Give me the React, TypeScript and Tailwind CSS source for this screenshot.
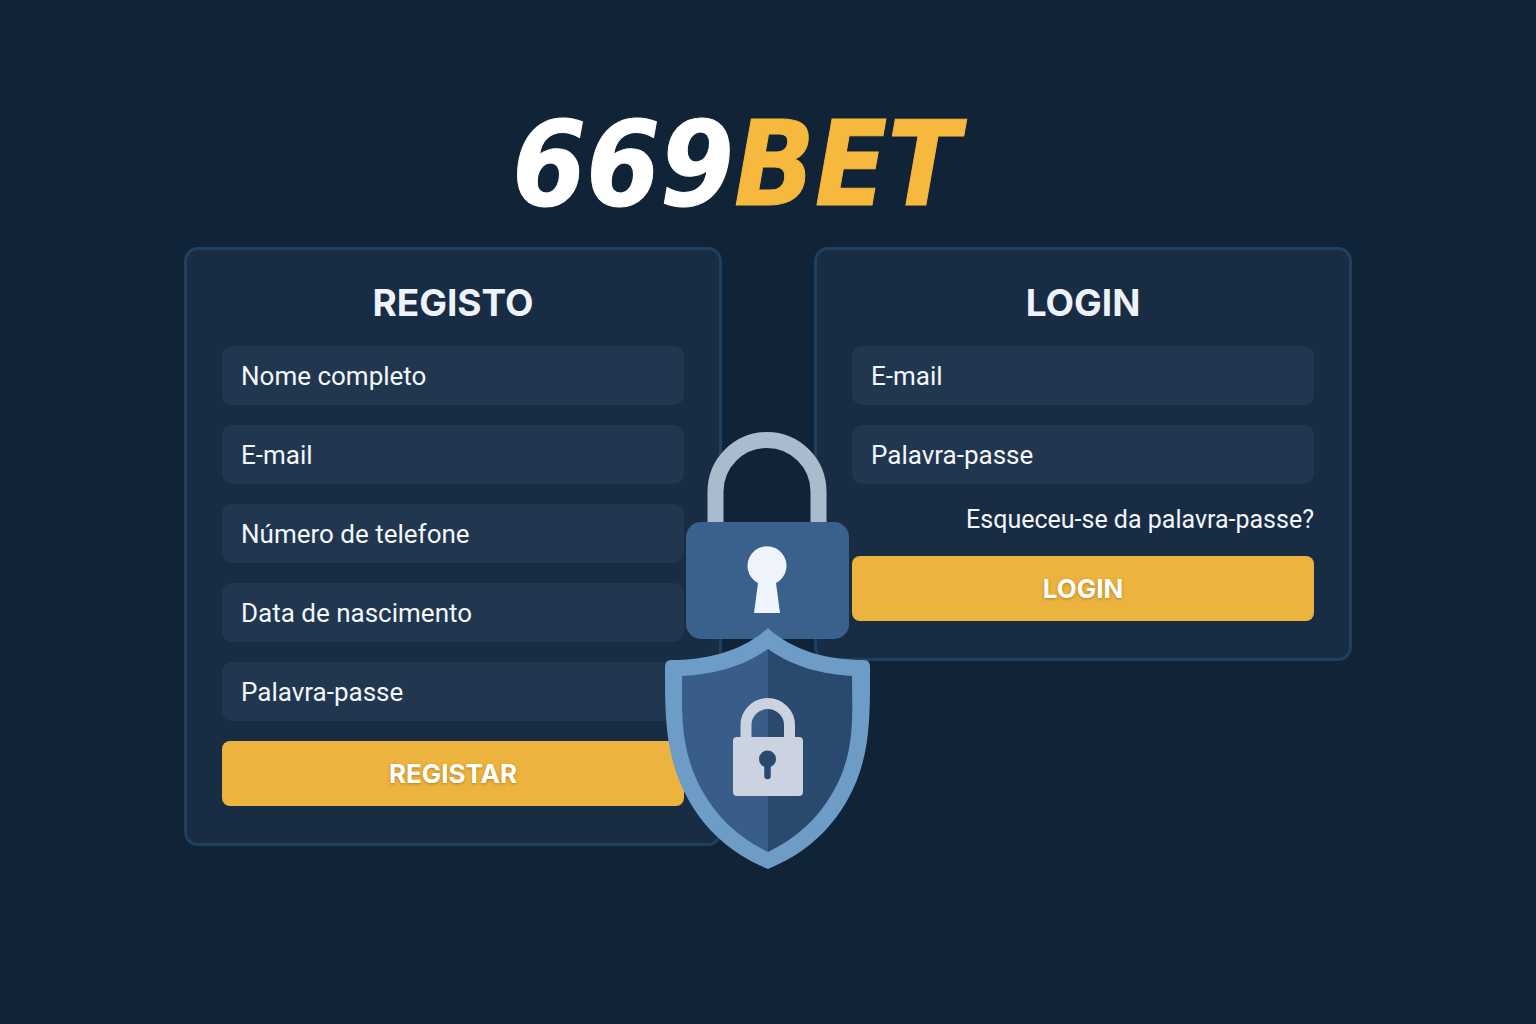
import type { ReactNode } from "react";

type FieldProps = {
  label: string;
  type?: string;
  autoComplete?: string;
};

type PanelProps = {
  title: string;
  children: ReactNode;
};

// The label sits in the same grid cell as the input and hides once there is a value
function Field({ label, type = "text", autoComplete }: FieldProps) {
  return (
    <label className="grid cursor-text items-center">
      <input
        type={type}
        autoComplete={autoComplete}
        placeholder=" "
        className="peer col-start-1 row-start-1 h-[59px] w-full rounded-[10px] bg-[#21374f] px-[19px] text-[26px] text-[#f3f6fc] outline-none focus:ring-2 focus:ring-[#6d9cc6]"
      />
      <span className="pointer-events-none col-start-1 row-start-1 px-[19px] text-[26px] leading-8 text-[#f3f6fc] peer-[:not(:placeholder-shown)]:invisible">
        {label}
      </span>
    </label>
  );
}

function SubmitButton({ children }: { children: ReactNode }) {
  return (
    <button
      type="submit"
      className="h-[65px] w-full rounded-lg bg-[#edb33f] font-[Inter,sans-serif] text-[26px] font-bold text-white text-shadow-[0_1px_3px_rgb(120_80_0/0.5)] cursor-pointer"
    >
      {children}
    </button>
  );
}

function Panel({ title, children }: PanelProps) {
  return (
    <section className="rounded-[14px] border-[3px] border-[#20405f] bg-[#182c44] px-[35px] pt-8 pb-[37px]">
      <h2 className="mb-[22px] text-center font-[Inter,sans-serif] text-[37px] leading-[42px] font-bold text-[#eef2fa]">{title}</h2>
      <form className="flex flex-col gap-5" onSubmit={(e) => e.preventDefault()}>
        {children}
      </form>
    </section>
  );
}

function SecurityBadge() {
  return (
    <svg viewBox="660 428 216 444" className="w-[216px]" aria-hidden="true">
      {/* big padlock */}
      <path d="M715.5 530V492a51.5 52 0 0 1 103 0V530" fill="none" stroke="#a9bbcc" strokeWidth="16" />
      <rect x="686" y="522" width="163" height="117" rx="15" fill="#3a618b" />
      <path d="M758 583A19.5 19.5 0 1 1 776 583L780 613H754Z" fill="#eff3fa" />

      {/* shield */}
      <path d="M768 628C793 651 828 660 864 660Q870 660 870 667C870 718 871 757 848 799C829 833 802 855 768 869C734 855 707 833 688 799C665 757 665 718 665 667Q665 660 671 660C707 660 743 651 768 628Z" fill="#6d9cc6" />
      <path d="M768 649V852C741 839 718 819 703 792C680 752 682 715 682 676C713 674 741 668 768 649Z" fill="#375d88" />
      <path d="M768 649V852C795 839 818 819 833 792C856 752 852 715 852 676C823 674 795 668 768 649Z" fill="#29496e" />

      {/* small padlock */}
      <path d="M746 740V725a21.75 21.5 0 0 1 43.5 0V740" fill="none" stroke="#cad3df" strokeWidth="11" />
      <rect x="733" y="737" width="70" height="59" rx="4" fill="#cad3df" />
      <circle cx="767.5" cy="759" r="8.5" fill="#29496e" />
      <path d="M767.5 760V776" stroke="#29496e" strokeWidth="6.5" strokeLinecap="round" />
    </svg>
  );
}

export default function App() {
  return (
    <div className="min-h-screen bg-[#112337] px-6 pt-[84px] pb-16 font-[Roboto,sans-serif]">
      <div className="mx-auto max-w-[1168px]">
        <h1 className="mb-[3px] pr-16 text-center font-['DejaVu_Sans_Condensed','DejaVu_Sans',sans-serif] text-[118px] leading-[160px] font-bold italic text-white [-webkit-text-stroke:1px]">
          669<span className="text-[#f6b93d]">BET</span>
        </h1>

        <main className="relative grid grid-cols-2 items-start gap-[92px]">
          <Panel title="REGISTO">
            <Field label="Nome completo" autoComplete="name" />
            <Field label="E-mail" type="email" autoComplete="email" />
            <Field label="Número de telefone" type="tel" autoComplete="tel" />
            <Field label="Data de nascimento" autoComplete="bday" />
            <Field label="Palavra-passe" type="password" autoComplete="new-password" />
            <SubmitButton>REGISTAR</SubmitButton>
          </Panel>

          <Panel title="LOGIN">
            <Field label="E-mail" type="email" autoComplete="email" />
            <Field label="Palavra-passe" type="password" autoComplete="current-password" />
            <a href="#" className="self-end text-[25px] leading-8 text-[#f3f6fc]">Esqueceu-se da palavra-passe?</a>
            <SubmitButton>LOGIN</SubmitButton>
          </Panel>

          <div className="pointer-events-none absolute top-[181px] left-1/2 -translate-x-1/2">
            <SecurityBadge />
          </div>
        </main>
      </div>
    </div>
  );
}
